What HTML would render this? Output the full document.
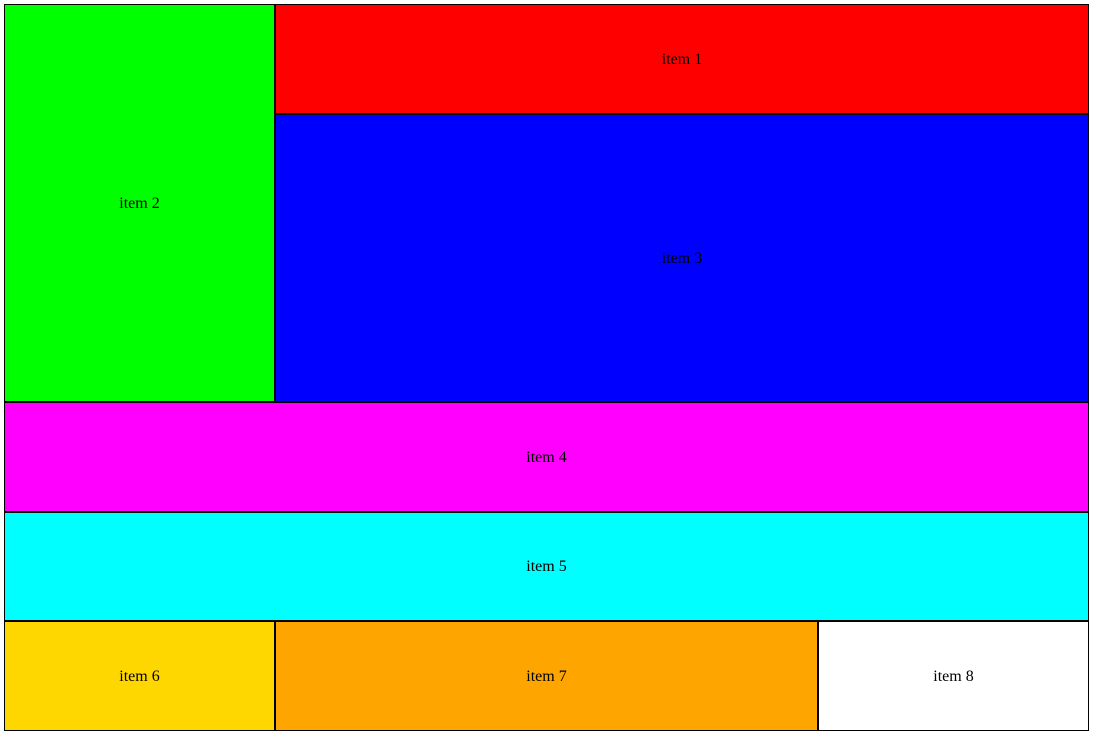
<!DOCTYPE html>
<html><head><style>
body{margin:0;background:#fff;width:1093px;height:738px;position:relative;font-family:"Liberation Serif",serif;font-size:16px}
div{position:absolute;box-sizing:border-box;border:1px solid #000;display:flex;align-items:center;justify-content:center;color:#000;padding-top:1px}
</style></head><body>
<div style="left:4px;top:4px;width:271px;height:398px;background:#0f0">item 2</div>
<div style="left:275px;top:4px;width:814px;height:110px;background:#f00">item 1</div>
<div style="left:275px;top:114px;width:814px;height:288px;background:#00f">item 3</div>
<div style="left:4px;top:402px;width:1085px;height:110px;background:#f0f">item 4</div>
<div style="left:4px;top:512px;width:1085px;height:109px;background:#0ff">item 5</div>
<div style="left:4px;top:621px;width:271px;height:110px;background:#ffd700">item 6</div>
<div style="left:275px;top:621px;width:543px;height:110px;background:#ffa500">item 7</div>
<div style="left:818px;top:621px;width:271px;height:110px;background:#fff">item 8</div>
</body></html>
